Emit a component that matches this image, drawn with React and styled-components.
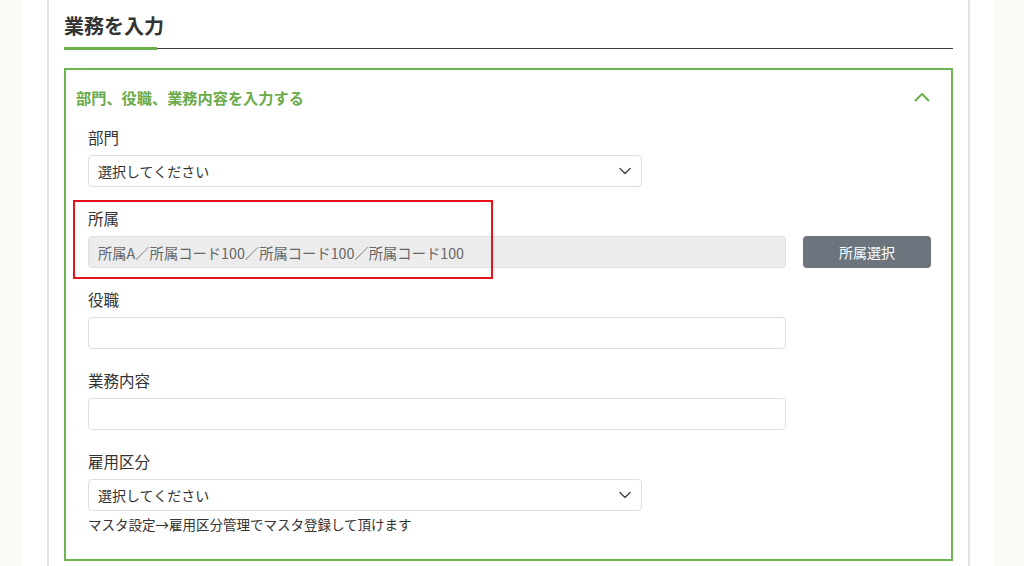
import React from 'react'
import styled, { createGlobalStyle } from 'styled-components'

const GlobalStyle = createGlobalStyle`
  html, body {
    margin: 0;
    padding: 0;
    background: #f9fcf4;
    font-family: "Noto Sans CJK JP", "Noto Sans", sans-serif;
    color: #333;
  }
`

const Page = styled.div`
  margin-left: 22px;
  width: 973px;
  height: 566px;
  overflow: hidden;
  background: #fff;
  padding-left: 25px;
  box-sizing: border-box;
`

const Panel = styled.div`
  width: 923px;
  min-height: 566px;
  box-sizing: border-box;
  border-left: 2px solid #e2e2e2;
  border-right: 2px solid #e2e2e2;
  padding: 11px 15px 0 15px;
`

const Title = styled.h2`
  margin: 0;
  font-size: 20px;
  line-height: 30px;
  font-weight: 700;
  color: #333;
`

const TitleRule = styled.div`
  position: relative;
  height: 4px;
  margin-top: 6px;
  &::before {
    content: '';
    position: absolute;
    left: 0;
    right: 0;
    top: 1px;
    height: 1px;
    background: #3a3f4a;
  }
  &::after {
    content: '';
    position: absolute;
    left: 0;
    top: 0;
    width: 93px;
    height: 3px;
    background: #6ab04c;
  }
`

const Box = styled.section`
  margin-top: 17px;
  border: 2px solid #6db553;
  padding-bottom: 25px;
`

const BoxHeader = styled.div`
  display: flex;
  align-items: center;
  justify-content: space-between;
  padding: 12px 21px 0 10px;
  height: 41px;
  box-sizing: border-box;
`

const BoxTitle = styled.span`
  font-size: 15.2px;
  line-height: 22px;
  font-weight: 700;
  color: #6aaa48;
`

const BoxBody = styled.div`
  padding: 14px 20px 0 22px;
`

const Field = styled.div`
  position: relative;
  margin-bottom: ${p => (p.$last ? '0' : '19px')};
`

const Label = styled.div`
  font-size: 15.5px;
  line-height: 24px;
  color: #333;
  margin-bottom: 6px;
`

const Row = styled.div`
  display: flex;
  align-items: center;
  gap: 17px;
`

const SelectBox = styled.div`
  width: 554px;
  height: 32px;
  box-sizing: border-box;
  border: 1px solid #dcdfe3;
  border-radius: 4px;
  background: #fff;
  display: flex;
  align-items: center;
  justify-content: space-between;
  padding: 0 10px 0 9px;
  font-size: 14px;
  color: #333;
`

const TextInput = styled.div`
  width: ${p => p.$width || 698}px;
  height: 32px;
  box-sizing: border-box;
  border: 1px solid #dcdfe3;
  border-radius: 4px;
  background: ${p => (p.$disabled ? '#ececec' : '#fff')};
  display: flex;
  align-items: center;
  padding: 0 9px;
  font-size: 14.3px;
  color: #666;
`

const Button = styled.button`
  width: 128px;
  height: 32px;
  border: none;
  border-radius: 4px;
  background: #6c757d;
  color: #fff;
  font-family: inherit;
  font-size: 14px;
`

const Help = styled.div`
  margin-top: 3px;
  font-size: 13.5px;
  line-height: 20px;
  color: #333;
`

const Highlight = styled.div`
  position: absolute;
  left: -15px;
  top: -6px;
  width: 420px;
  height: 79px;
  box-sizing: border-box;
  border: 2px solid #e8121b;
  pointer-events: none;
`

const ChevronDown = () => (
  <svg width="12" height="8" viewBox="0 0 12 8" fill="none">
    <path d="M1 1.5l5 5 5-5" stroke="#444" strokeWidth="1.4" strokeLinecap="round" strokeLinejoin="round" />
  </svg>
)

const ChevronUp = () => (
  <svg width="16" height="10" viewBox="0 0 16 10" fill="none">
    <path d="M1.5 8.5L8 2l6.5 6.5" stroke="#6ab04c" strokeWidth="2" strokeLinecap="round" strokeLinejoin="round" />
  </svg>
)

const Select = ({ value }) => (
  <SelectBox>
    <span>{value}</span>
    <ChevronDown />
  </SelectBox>
)

export default function App() {
  return (
    <>
      <GlobalStyle />
      <Page>
        <Panel>
          <Title>業務を入力</Title>
          <TitleRule />
          <Box>
            <BoxHeader>
              <BoxTitle>部門、役職、業務内容を入力する</BoxTitle>
              <ChevronUp />
            </BoxHeader>
            <BoxBody>
              <Field>
                <Label>部門</Label>
                <Select value="選択してください" />
              </Field>
              <Field>
                <Highlight />
                <Label>所属</Label>
                <Row>
                  <TextInput $disabled>所属A／所属コード100／所属コード100／所属コード100</TextInput>
                  <Button>所属選択</Button>
                </Row>
              </Field>
              <Field>
                <Label>役職</Label>
                <TextInput />
              </Field>
              <Field>
                <Label>業務内容</Label>
                <TextInput />
              </Field>
              <Field $last>
                <Label>雇用区分</Label>
                <Select value="選択してください" />
                <Help>マスタ設定→雇用区分管理でマスタ登録して頂けます</Help>
              </Field>
            </BoxBody>
          </Box>
        </Panel>
      </Page>
    </>
  )
}
